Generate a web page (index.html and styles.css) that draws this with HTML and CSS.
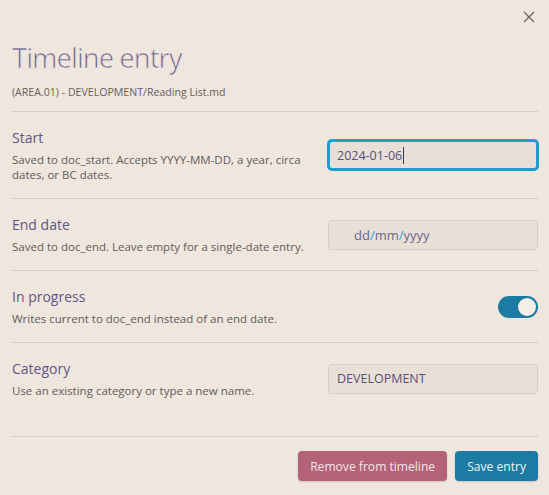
FILE: index.html
```html
<!DOCTYPE html>
<html lang="en">
<head>
    <meta charset="UTF-8">
    <meta name="viewport" content="width=device-width, initial-scale=1.0">
    <title>Timeline entry</title>
    <link rel="stylesheet" href="styles.css">
</head>
<body>
    <div class="modal">
        <button class="modal-close" aria-label="Close">
            <svg width="12" height="12" viewBox="0 0 12 12">
                <path d="M1 1L11 11M11 1L1 11" stroke="currentColor" stroke-width="1.3" fill="none"/>
            </svg>
        </button>
        <h1 class="modal-title">Timeline entry</h1>
        <div class="modal-path">(AREA.01) - DEVELOPMENT/Reading List.md</div>

        <div class="setting">
            <div class="setting-info">
                <div class="setting-name">Start</div>
                <div class="setting-desc">Saved to doc_start. Accepts YYYY-MM-DD, a year, circa dates, or BC dates.</div>
            </div>
            <div class="field is-focused">2024-01-06<span class="caret"></span></div>
        </div>

        <div class="setting">
            <div class="setting-info">
                <div class="setting-name">End date</div>
                <div class="setting-desc">Saved to doc_end. Leave empty for a single-date entry.</div>
            </div>
            <div class="field field-date">
                <span>dd</span><span class="sep">/</span><span>mm</span><span class="sep">/</span><span>yyyy</span>
            </div>
        </div>

        <div class="setting">
            <div class="setting-info">
                <div class="setting-name">In progress</div>
                <div class="setting-desc">Writes current to doc_end instead of an end date.</div>
            </div>
            <div class="toggle is-on"><span class="toggle-knob"></span></div>
        </div>

        <div class="setting">
            <div class="setting-info">
                <div class="setting-name">Category</div>
                <div class="setting-desc">Use an existing category or type a new name.</div>
            </div>
            <div class="field">DEVELOPMENT</div>
        </div>

        <div class="modal-buttons">
            <button class="btn btn-danger">Remove from timeline</button>
            <button class="btn btn-primary">Save entry</button>
        </div>
    </div>
</body>
</html>
```

FILE: styles.css
```css
body {
    font-family: "Open Sans", "Noto Sans", sans-serif;
    margin: 0;
    padding: 0;
    background: #efe6de;
}
.modal {
    position: relative;
    padding: 12px 11px 13px 12px;
}
.modal-close {
    position: absolute;
    top: 11px;
    right: 14px;
    border: none;
    background: transparent;
    padding: 0;
    color: #6a6561;
    cursor: pointer;
}
/* no light cut installed, so thin the strokes with a background-coloured outline */
.modal-title {
    font-size: 27.5px;
    font-weight: 400;
    line-height: 34px;
    letter-spacing: -1px;
    color: #6b6491;
    -webkit-text-stroke: 0.7px #efe6de;
    margin: 29px 0 0;
}
.modal-path {
    font-size: 10.6px;
    line-height: 16px;
    color: #67615d;
    margin: 9px 0 11px;
}
.setting {
    display: flex;
    align-items: center;
    justify-content: space-between;
    border-top: 1px solid #d6ccc3;
    padding: 16px 0;
}
.setting-info {
    max-width: 305px;
}
.setting-name {
    font-size: 14px;
    line-height: 20px;
    color: #5e5688;
}
.setting-desc {
    font-size: 11.5px;
    line-height: 15px;
    color: #625c58;
    margin-top: 4px;
}
.field {
    box-sizing: border-box;
    width: 210px;
    height: 30px;
    padding: 0 8px;
    display: flex;
    align-items: center;
    background: #e8e0d7;
    border: 1px solid #d7cec5;
    border-radius: 4px;
    font-size: 12.5px;
    color: #574e7c;
}
.field.is-focused {
    border: 2px solid #1c9fd0;
    box-shadow: 0 0 0 1px #1c9fd0;
    padding-left: 7px;
}
.caret {
    display: inline-block;
    width: 1px;
    height: 17px;
    background: #3b3550;
    margin-left: 1px;
}
.field-date {
    padding-left: 25px;
    font-size: 13px;
    color: #6e6589;
}
.field-date .sep {
    color: #2ea6dc;
}
.toggle {
    box-sizing: border-box;
    width: 40px;
    height: 22px;
    border-radius: 11px;
    background: #1c7ba2;
    padding: 2px;
    display: flex;
    justify-content: flex-end;
}
.toggle-knob {
    width: 18px;
    height: 18px;
    border-radius: 50%;
    background: #f4eee9;
}
.modal-buttons {
    display: flex;
    justify-content: flex-end;
    gap: 8px;
    border-top: 1px solid #d6ccc3;
    margin-top: 22px;
    padding-top: 14px;
}
.btn {
    font-family: inherit;
    font-size: 12.1px;
    height: 30px;
    padding: 0 12px;
    border: none;
    border-radius: 4px;
    cursor: pointer;
    box-shadow: 0 1px 2px rgba(0, 0, 0, 0.15);
}
.btn-danger {
    background: #b36277;
    color: #f6e6ea;
}
.btn-primary {
    background: #1c7ba2;
    color: #eaf3f7;
}
```
